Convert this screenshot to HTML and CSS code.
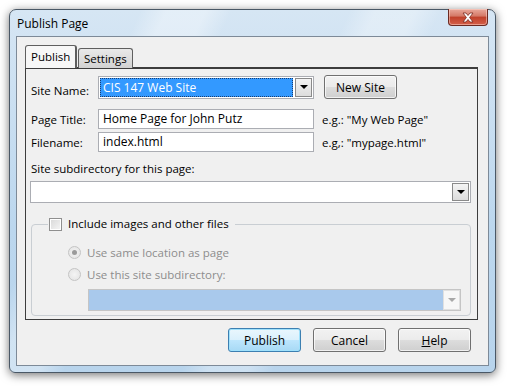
FILE: index.html
```html
<!DOCTYPE html>
<html lang="en">
<head>
    <meta charset="UTF-8">
    <title>Publish Page</title>
    <link rel="stylesheet" href="styles.css">
</head>
<body>
    <div class="window">
        <div class="titlebar">
            <span class="title">Publish Page</span>
            <div class="close-btn">
                <svg width="14" height="11" viewBox="0 0 14 11">
                    <path d="M2 1 L5 1 L7 3.5 L9 1 L12 1 L8.6 5.5 L12 10 L9 10 L7 7.5 L5 10 L2 10 L5.4 5.5 Z" fill="#fff" stroke="#7a2a20" stroke-width="0.8"/>
                </svg>
            </div>
        </div>
        <div class="client">
            <div class="tabs">
                <div class="tab active">Publish</div>
                <div class="tab">Settings</div>
            </div>
            <div class="panel">
                <div class="form-grid">
                    <label class="label">Site Name:</label>
                    <div class="combo site-combo">
                        <div class="combo-field">
                            <span class="selected-text">CIS 147 Web Site</span>
                        </div>
                        <div class="drop-btn"><span class="arrow"></span></div>
                    </div>
                    <div class="button new-site">New Site</div>

                    <label class="label">Page Title:</label>
                    <div class="textbox">Home Page for John Putz</div>
                    <span class="hint">e.g.: "My Web Page"</span>

                    <label class="label">Filename:</label>
                    <div class="textbox">index.html</div>
                    <span class="hint">e.g,: "mypage.html"</span>
                </div>

                <div class="subdir-label">Site subdirectory for this page:</div>
                <div class="combo subdir-combo">
                    <div class="combo-field"></div>
                    <div class="drop-btn"><span class="arrow"></span></div>
                </div>

                <fieldset class="group">
                    <legend class="group-legend">
                        <span class="checkbox"></span>
                        <span>Include images and other files</span>
                    </legend>
                    <div class="radio-row">
                        <span class="radio checked"></span>
                        <span>Use same location as page</span>
                    </div>
                    <div class="radio-row">
                        <span class="radio"></span>
                        <span>Use this site subdirectory:</span>
                    </div>
                    <div class="combo disabled-combo">
                        <div class="combo-field"></div>
                        <div class="drop-btn"><span class="arrow"></span></div>
                    </div>
                </fieldset>
            </div>
            <div class="actions">
                <div class="button default">Publish</div>
                <div class="button">Cancel</div>
                <div class="button"><u>H</u>elp</div>
            </div>
        </div>
    </div>
</body>
</html>
```

FILE: styles.css
```css
body {
    margin: 0;
    padding: 9px;
    background: #ffffff;
    font-family: "Open Sans", "Noto Sans", sans-serif;
    font-size: 11.5px;
    color: #000;
    width: 510px;
    height: 388px;
    box-sizing: border-box;
    overflow: hidden;
}

.window {
    width: 487px;
    height: 364px;
    box-sizing: border-box;
    border: 1px solid #4a5866;
    border-radius: 7px 7px 6px 6px;
    background:
        linear-gradient(115deg, transparent 0 20%, rgba(255,255,255,0.35) 24% 30%, transparent 34% 52%, rgba(255,255,255,0.3) 56% 62%, transparent 66%),
        linear-gradient(#d6e6f4, #bcd7ee 60%, #b8d4ec);
    box-shadow: 0 2px 10px rgba(0, 0, 0, 0.55);
    display: flex;
    flex-direction: column;
    padding: 0 6px 6px 6px;
}

.titlebar {
    height: 26px;
    display: flex;
    align-items: flex-start;
    flex-shrink: 0;
}

.title {
    line-height: 27px;
    padding-left: 1px;
    font-size: 12px;
    color: #000;
}

.close-btn {
    margin-left: auto;
    margin-right: 1px;
    margin-top: -1px;
    width: 40px;
    height: 17px;
    box-sizing: border-box;
    border: 1px solid #6b2a22;
    border-top: none;
    border-radius: 0 0 4px 4px;
    background: linear-gradient(#e9a99c, #d47866 45%, #c0402a 50%, #d4604a 100%);
    display: flex;
    align-items: center;
    justify-content: center;
    box-shadow: inset 0 0 0 1px rgba(255, 220, 210, 0.5);
}

.client {
    flex: 1;
    min-height: 0;
    border: 1px solid #7d8a98;
    background: #f0f0f0;
    display: flex;
    flex-direction: column;
    padding: 9px 10px 0 8px;
}

.tabs {
    display: flex;
    align-items: flex-end;
    height: 22px;
    margin-bottom: -1px;
    position: relative;
    z-index: 1;
}

.tab {
    box-sizing: border-box;
    height: 20px;
    padding: 0 5px;
    border: 1px solid #5f5f5f;
    border-bottom: none;
    border-radius: 3px 3px 0 0;
    background: linear-gradient(#e9e9e9, #d2d2d2);
    line-height: 19px;
    margin-left: 1px;
}

.tab.active {
    height: 23px;
    width: 52px;
    background: #f7f7f7;
    line-height: 22px;
    margin-left: 0;
    padding: 0 5px;
    border-right-width: 2px;
}

.panel {
    height: 253px;
    box-sizing: border-box;
    border: 1px solid #3d3d3d;
    border-top-width: 2px;
    background: #f0f0f0;
    padding: 6px 6px 0 4px;
    display: flex;
    flex-direction: column;
}

.form-grid {
    display: grid;
    grid-template-columns: 58px 216px auto;
    column-gap: 10px;
    row-gap: 3px;
    align-items: center;
}

.label {
    padding-left: 1px;
    white-space: nowrap;
}

.site-combo {
    height: 23px;
    margin-bottom: 7px;
}

.new-site {
    width: 74px;
    margin-bottom: 7px;
}

.combo {
    display: flex;
    box-sizing: border-box;
    border: 1px solid #abadb3;
    background: #fff;
}

.combo-field {
    flex: 1;
    display: flex;
    align-items: center;
}

.site-combo .combo-field {
    margin: 1px;
    background: #3399ff;
    outline: 1px dotted #1a3d70;
    outline-offset: -1px;
}

.selected-text {
    color: #fff;
    padding-left: 3px;
    font-size: 12px;
}

.drop-btn {
    width: 17px;
    box-sizing: border-box;
    border: 1px solid #8a8a8a;
    background: linear-gradient(#f4f4f4, #dcdcdc);
    display: flex;
    align-items: center;
    justify-content: center;
    margin: 1px;
}

.arrow {
    width: 0;
    height: 0;
    border-left: 4px solid transparent;
    border-right: 4px solid transparent;
    border-top: 4px solid #000;
}

.textbox {
    height: 20px;
    box-sizing: border-box;
    border: 1px solid #abadb3;
    background: #fff;
    padding-left: 4px;
    line-height: 18px;
    font-size: 12px;
}

.hint {
    margin-left: -2px;
    white-space: nowrap;
}

.subdir-label {
    margin-top: 9px;
    padding-left: 1px;
    line-height: 15px;
}

.subdir-combo {
    margin-top: 5px;
    height: 22px;
}

.group {
    margin: 14px 0 0 1px;
    padding: 0 9px 4px 36px;
    border: 1px solid #c9ced3;
    border-radius: 4px;
    min-width: 0;
}

.group-legend {
    display: flex;
    align-items: center;
    gap: 6px;
    padding: 0 6px 0 1px;
    margin-left: -20px;
    line-height: 14px;
}

.checkbox {
    width: 13px;
    height: 13px;
    box-sizing: border-box;
    border: 1px solid #8f8f8f;
    background: linear-gradient(135deg, #d8d8d8, #f6f6f6);
    box-shadow: inset 0 0 0 1px #fff;
}

.radio-row {
    display: flex;
    align-items: center;
    gap: 6px;
    height: 22px;
    color: #8d8d8d;
}

.radio-row:first-of-type {
    margin-top: 10px;
}

.radio {
    width: 13px;
    height: 13px;
    box-sizing: border-box;
    border: 1px solid #c4c4c4;
    border-radius: 50%;
    background: radial-gradient(circle, #f4f4f4, #e2e2e2);
    display: flex;
    align-items: center;
    justify-content: center;
}

.radio.checked::after {
    content: "";
    width: 5px;
    height: 5px;
    border-radius: 50%;
    background: #9a9a9a;
}

.disabled-combo {
    margin: 4px 0 0 20px;
    height: 22px;
    border-color: #c5c5c5;
    background: #f4f4f4;
}

.disabled-combo .combo-field {
    background: #a9c9ec;
}

.disabled-combo .drop-btn {
    margin: 0;
    border: 1px solid #e0e0e0;
    background: #f7f7f7;
}

.disabled-combo .arrow {
    border-top-color: #a8a8a8;
}

.actions {
    display: flex;
    justify-content: flex-end;
    gap: 12px;
    padding-top: 8px;
    padding-right: 7px;
}

.button {
    width: 73px;
    height: 24px;
    box-sizing: border-box;
    border: 1px solid #707070;
    border-radius: 3px;
    background: linear-gradient(#f2f2f2 0%, #ebebeb 50%, #dddddd 50%, #cfcfcf 100%);
    box-shadow: inset 0 0 0 1px rgba(255, 255, 255, 0.7);
    display: flex;
    align-items: center;
    justify-content: center;
    font-size: 12px;
}

.button.default {
    border-color: #3c7fb1;
    box-shadow: inset 0 0 0 1px #9fe1fc;
    background: linear-gradient(#eaf6fd 0%, #d9f0fc 50%, #bee6fd 50%, #a7d9f5 100%);
}
```
